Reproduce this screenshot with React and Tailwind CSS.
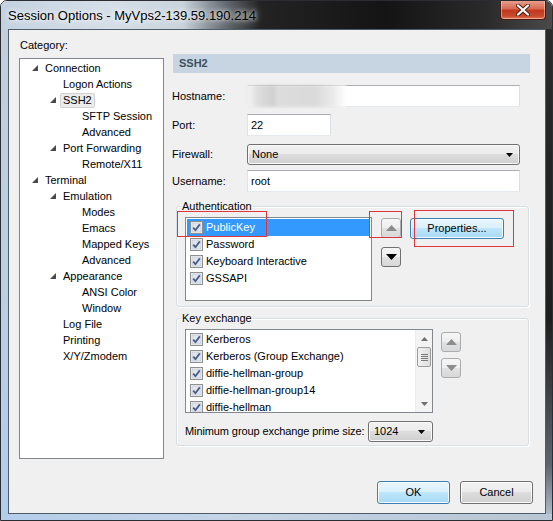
import React from "react";

const tree = [
  [0, "Connection", true],
  [1, "Logon Actions"],
  [1, "SSH2", true, true],
  [2, "SFTP Session"],
  [2, "Advanced"],
  [1, "Port Forwarding", true],
  [2, "Remote/X11"],
  [0, "Terminal", true],
  [1, "Emulation", true],
  [2, "Modes"],
  [2, "Emacs"],
  [2, "Mapped Keys"],
  [2, "Advanced"],
  [1, "Appearance", true],
  [2, "ANSI Color"],
  [2, "Window"],
  [1, "Log File"],
  [1, "Printing"],
  [1, "X/Y/Zmodem"],
];
const pads = ["pl-[12px]", "pl-[30px]", "pl-[49px]"];

function Expander() {
  return (
    <svg width="6" height="6" viewBox="0 0 6 6">
      <polygon points="6,0 6,6 0,6" fill="#4a4a4a" />
    </svg>
  );
}

function Check() {
  return (
    <svg width="13" height="13" viewBox="0 0 13 13" className="shrink-0">
      <rect x="0.5" y="0.5" width="12" height="12" fill="#f4f4f4" stroke="#8e8f8f" />
      <rect x="2" y="2" width="9" height="9" fill="#dfe5ec" stroke="#b8c0ca" strokeWidth="0.6" />
      <path d="M3.2 6.6 L5.4 9.2 L9.8 3.4" stroke="#4a5c8c" strokeWidth="1.8" fill="none" strokeLinejoin="round" />
    </svg>
  );
}

function Tri({ up, color, w = 11, h = 6 }) {
  return (
    <svg width={w} height={h} viewBox={`0 0 ${w} ${h}`}>
      <polygon points={up ? `0,${h} ${w},${h} ${w / 2},0` : `0,0 ${w},0 ${w / 2},${h}`} fill={color} />
    </svg>
  );
}

function ArrowBtn({ up, enabled }) {
  return (
    <div
      className={
        "w-[20px] h-[20px] rounded-[3px] border flex items-center justify-center bg-[linear-gradient(180deg,#f6f6f6_0%,#eeeeee_49%,#e2e2e2_50%,#d8d8d8_100%)] " +
        (enabled ? "border-[#707070]" : "border-[#a9acaf]")
      }
    >
      <Tri up={up} color={enabled ? "#000000" : "#8c8c8c"} />
    </div>
  );
}

function Combo({ text, className }) {
  return (
    <div
      className={
        "h-[21px] rounded-[3px] border border-[#707070] flex items-center justify-between pl-[10px] pr-[6px] bg-[linear-gradient(180deg,#f2f2f2_0%,#ebebeb_49%,#dddddd_50%,#cfcfcf_100%)] shadow-[inset_0_0_0_1px_#fafafa] " +
        className
      }
    >
      <span>{text}</span>
      <Tri color="#000" w={7} h={4} />
    </div>
  );
}

function TextBox({ className, children }) {
  return (
    <div
      className={
        "relative h-[22px] bg-white border border-[#e3e9ef] border-t-[#abadb3] border-l-[#e2e3ea] border-r-[#dbdfe6] flex items-center pl-[3px] " +
        className
      }
    >
      {children}
    </div>
  );
}

function Group({ title, children, className }) {
  return (
    <fieldset
      className={
        "ml-[4px] w-[353px] border border-[#d5dfe5] rounded-[3px] shadow-[inset_1px_1px_0_#ffffff,1px_1px_0_#ffffff] " +
        className
      }
    >
      <legend className="ml-[4px] px-[1px] leading-[12px] text-[11px]">{title}</legend>
      {children}
    </fieldset>
  );
}

function ListRow({ label, selected }) {
  return (
    <div
      className={
        "h-[17px] flex items-center pl-[3px] gap-[3px] whitespace-nowrap " +
        (selected ? "bg-[#3399ff] text-white" : "")
      }
    >
      <Check />
      <span>{label}</span>
    </div>
  );
}

export default function App() {
  return (
    <div className="w-[553px] h-[521px] bg-white font-[family-name:Liberation_Sans,Arial,sans-serif] text-[11px] text-black">
      <div className="relative w-full h-full flex flex-col rounded-t-[7px] overflow-hidden border border-[#2a2d31]">
        {/* title bar */}
        <div className="h-[28px] shrink-0 flex items-start justify-between bg-[linear-gradient(90deg,#c4d2e0_0%,#d6dfe8_20%,#c9d3dc_33%,#6c737a_40%,#232323_47%,#141414_70%,#2a2a2a_88%,#4a4a4a_100%)]">
          <div className="pl-[7px] pt-[7px] text-[13px] leading-[15px] text-black [text-shadow:0_0_8px_#ffffff,0_0_4px_#ffffff]">
            Session Options - MyVps2-139.59.190.214
          </div>
          <div className="mr-[6px] -mt-px w-[46px] h-[20px] rounded-b-[4px] border border-[#4b1a12] border-t-0 flex items-center justify-center bg-[linear-gradient(180deg,#e8a593_0%,#d86a52_45%,#c2391f_55%,#c94a2e_85%,#e07b55_100%)] shadow-[inset_0_0_0_1px_rgba(255,220,200,0.5)]">
            <svg width="14" height="12" viewBox="0 0 14 12">
              <path d="M2 1.5 L12 10.5 M12 1.5 L2 10.5" stroke="#4a1a10" strokeWidth="4" strokeLinecap="round" />
              <path d="M2 1.5 L12 10.5 M12 1.5 L2 10.5" stroke="#ffffff" strokeWidth="2.3" strokeLinecap="round" />
            </svg>
          </div>
        </div>

        <div className="flex flex-1">
          {/* left frame */}
          <div className="w-[7px] shrink-0 bg-[linear-gradient(180deg,#c3cfdb_0%,#bccfe3_50%,#b2cdeb_100%)]" />
          {/* client */}
          <div className="w-[538px] h-[485px] border border-[#4f5d6b] bg-[#f0f0f0] flex flex-col">
            <div className="flex items-start">
              {/* left column */}
              <div className="ml-[10px] pt-[8px] w-[145px]">
                <div className="h-[14px] leading-[14px] pl-px">Category:</div>
                <div className="mt-[6px] h-[401px] bg-white border border-[#828790] pt-px">
                  {tree.map(([lvl, label, exp, sel], i) => (
                    <div key={i} className={"h-[16px] flex items-center whitespace-nowrap " + pads[lvl]}>
                      <div className="w-[13px] shrink-0 flex items-center">{exp ? <Expander /> : null}</div>
                      {sel ? (
                        <span className="-ml-[3px] px-[2px] leading-[13px] border border-[#d2d2d2] rounded-[2px] bg-[#ececec]">
                          {label}
                        </span>
                      ) : (
                        <span>{label}</span>
                      )}
                    </div>
                  ))}
                </div>
              </div>

              {/* right column */}
              <div className="ml-[8px] mt-[24px] w-[358px]">
                <div className="ml-px w-[357px] h-[19px] bg-[#c7d5e2] flex items-center pl-[6px] font-bold text-[#3d4f61]">
                  SSH2
                </div>

                <div className="mt-[12px] flex items-center">
                  <div className="w-[75px]">Hostname:</div>
                  <TextBox className="w-[273px] border-l-transparent">
                    <div className="absolute -left-[6px] -top-px w-[104px] h-[22px] blur-[1.5px] bg-[linear-gradient(90deg,#f0f0f0_0%,#ececec_10%,#dedede_14%,#d0d0d0_30%,#dcdcdc_34%,#d9d9d9_70%,#ebebeb_88%,#ffffff_100%)]" />
                  </TextBox>
                </div>

                <div className="mt-[7px] flex items-center">
                  <div className="w-[75px]">Port:</div>
                  <TextBox className="w-[84px]">22</TextBox>
                </div>

                <div className="mt-[8px] flex items-center">
                  <div className="w-[75px]">Firewall:</div>
                  <Combo text="None" className="w-[273px] !pl-[4px]" />
                </div>

                <div className="mt-[5px] flex items-center">
                  <div className="w-[75px]">Username:</div>
                  <TextBox className="w-[273px] h-[21px]">root</TextBox>
                </div>

                <Group title="Authentication" className="mt-[8px]">
                  <div className="pl-[8px] pt-[5px] pb-[5px] flex items-start">
                    <div className="w-[187px] h-[84px] bg-white border border-[#828790] p-px">
                      <ListRow label="PublicKey" selected />
                      <ListRow label="Password" />
                      <ListRow label="Keyboard Interactive" />
                      <ListRow label="GSSAPI" />
                    </div>
                    <div className="ml-[9px] mt-px flex flex-col gap-[9px]">
                      <ArrowBtn up />
                      <ArrowBtn enabled />
                    </div>
                    <div className="ml-[9px] mt-px w-[94px] h-[21px] rounded-[3px] border border-[#3c7fb1] flex items-center justify-center bg-[linear-gradient(180deg,#eaf6fd_0%,#d9f0fc_49%,#bee6fd_50%,#a7d9f5_100%)] shadow-[inset_0_0_0_1px_#f4fbff]">
                      Properties...
                    </div>
                  </div>
                </Group>

                <Group title="Key exchange" className="mt-[5px]">
                  <div className="pl-[8px] pt-[5px] pb-[3px]">
                    <div className="flex items-start">
                      <div className="w-[248px] h-[84px] bg-white border border-[#828790] flex">
                        <div className="flex-1 overflow-hidden pt-px pl-px">
                          <ListRow label="Kerberos" />
                          <ListRow label="Kerberos (Group Exchange)" />
                          <ListRow label="diffie-hellman-group" />
                          <ListRow label="diffie-hellman-group14" />
                          <ListRow label="diffie-hellman" />
                        </div>
                        <div className="w-[17px] flex flex-col bg-[#f3f3f3] border-l border-[#ececec]">
                          <div className="h-[17px] flex items-center justify-center">
                            <Tri up color="#6f6f6f" w={7} h={4} />
                          </div>
                          <div className="mx-px h-[20px] rounded-[2px] border border-[#9c9c9c] bg-[linear-gradient(90deg,#f2f2f2,#dedede)] flex flex-col items-center justify-center gap-[1px]">
                            <div className="w-[7px] h-px bg-[#7a7a7a]" />
                            <div className="w-[7px] h-px bg-[#7a7a7a]" />
                            <div className="w-[7px] h-px bg-[#7a7a7a]" />
                            <div className="w-[7px] h-px bg-[#7a7a7a]" />
                          </div>
                          <div className="flex-1" />
                          <div className="h-[17px] flex items-center justify-center">
                            <Tri color="#6f6f6f" w={7} h={4} />
                          </div>
                        </div>
                      </div>
                      <div className="ml-[8px] mt-[3px] flex flex-col gap-[6px]">
                        <ArrowBtn up />
                        <ArrowBtn />
                      </div>
                    </div>
                    <div className="mt-[8px] flex items-center">
                      <div className="w-[183px] shrink-0 whitespace-nowrap tracking-[-0.1px]">Minimum group exchange prime size:</div>
                      <Combo text="1024" className="w-[65px] shrink-0 !pl-[5px] !pr-[7px]" />
                    </div>
                  </div>
                </Group>
              </div>
            </div>

            <div className="mt-auto flex justify-end gap-[10px] pr-[12px] pb-[9px]">
              <div className="w-[73px] h-[23px] rounded-[3px] border border-[#3c7fb1] flex items-center justify-center bg-[linear-gradient(180deg,#eaf6fd_0%,#d9f0fc_49%,#bee6fd_50%,#a7d9f5_100%)] shadow-[inset_0_0_0_1px_#f4fbff]">
                OK
              </div>
              <div className="w-[73px] h-[23px] rounded-[3px] border border-[#707070] flex items-center justify-center bg-[linear-gradient(180deg,#f2f2f2_0%,#ebebeb_49%,#dddddd_50%,#cfcfcf_100%)] shadow-[inset_0_0_0_1px_#fcfcfc]">
                Cancel
              </div>
            </div>
          </div>
          {/* right frame */}
          <div className="flex-1 bg-[linear-gradient(180deg,#2b2b2b_0%,#1e1e1e_60%,#5d6670_90%,#a9bacb_100%)]" />
        </div>
        {/* bottom frame */}
        <div className="h-[6px] shrink-0 bg-[linear-gradient(90deg,#b4cdea_0%,#c3d4e6_40%,#b9c6d3_100%)]" />

        {/* red annotation rectangles */}
        <div className="absolute left-[176px] top-[210px] w-[90px] h-[26px] border border-[#e0353a]" />
        <div className="absolute left-[368px] top-[210px] w-[33px] h-[27px] border border-[#e0353a]" />
        <div className="absolute left-[413px] top-[209px] w-[100px] h-[37px] border border-[#e0353a]" />
      </div>
    </div>
  );
}
